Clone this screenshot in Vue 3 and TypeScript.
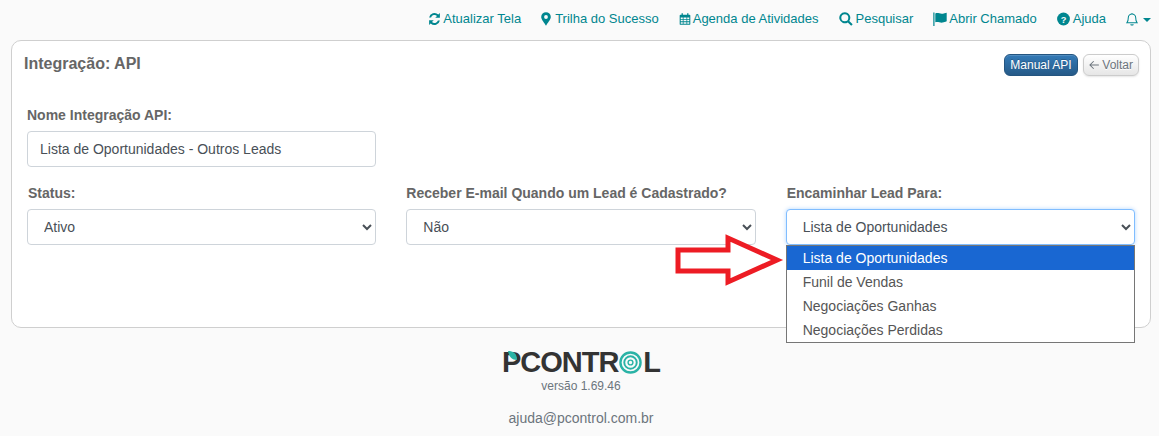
<script setup lang="ts">
const ops: string[] = ['Lista de Oportunidades', 'Funil de Vendas', 'Negociações Ganhas', 'Negociações Perdidas']
</script>

<template>
  <div class="page">
    <nav class="topnav">
      <a class="navitem">
        <svg class="ic" viewBox="0 0 14 14"><path d="M12.8 .6v5H7.800l1.900-1.900A3.900 3.900 0 0 0 3.300 5.300H1.200a5.900 5.900 0 0 1 9.900-3.100zM1.200 13.400v-5h5l-1.900 1.900a3.900 3.900 0 0 0 6.400-1.600h2.100a5.900 5.900 0 0 1-9.900 3.100z"/></svg>
        Atualizar Tela
      </a>
      <a class="navitem pin">
        <svg class="ic narrow" viewBox="0 0 10 14"><path fill-rule="evenodd" d="M5 .2a4.800 4.800 0 0 1 4.800 4.800C9.800 7.500 6.500 11 5 13.800 3.500 11 .2 7.500.2 5A4.800 4.800 0 0 1 5 .2zm0 2.900a1.900 1.900 0 1 0 0 3.800 1.900 1.900 0 0 0 0-3.800z"/></svg>
        Trilha do Sucesso
      </a>
      <a class="navitem">
        <svg class="ic cal" viewBox="0 0 14 14"><path fill-rule="evenodd" d="M3 .3h1.500V2h5V.3H11V2h1.200a1 1 0 0 1 1 1v9.800a1 1 0 0 1-1 1H1.800a1 1 0 0 1-1-1V3a1 1 0 0 1 1-1H3zM2 5.200v1.800h2.400V5.200zm3.300 0v1.800h3.400V5.200zm4.300 0v1.800H12V5.200zM2 8v1.700h2.400V8zm3.300 0v1.700h3.400V8zm4.300 0v1.700H12V8zm-7.600 2.700v1.900h2.400v-1.900zm3.300 0v1.900h3.400v-1.900zm4.300 0v1.900H12v-1.900z"/></svg>
        Agenda de Atividades
      </a>
      <a class="navitem wide">
        <svg class="ic big" viewBox="0 0 14 14"><path fill-rule="evenodd" d="M5.800 .3a5.500 5.500 0 0 1 4.500 8.600l3.400 3.400-1.500 1.500-3.400-3.400A5.500 5.500 0 1 1 5.800 .3zm0 2a3.500 3.500 0 1 0 0 7 3.500 3.500 0 0 0 0-7z"/></svg>
        Pesquisar
      </a>
      <a class="navitem flag">
        <svg class="ic big" viewBox="0 0 14 14"><path d="M.3 .5h1.200V14H.3zM2.300 1.500c2.600-1.200 4.800.8 7.600.2.900-.2 2.300-.6 3.800-1v8.600c-1.500.7-2.900 1.100-3.800 1.300-2.800.6-5-1.300-7.600-.3z"/></svg>
        Abrir Chamado
      </a>
      <a class="navitem wide">
        <svg class="ic" viewBox="0 0 14 14"><circle cx="7" cy="7" r="6.900"/><text x="7" y="10.800" text-anchor="middle" class="qmark">?</text></svg>
        Ajuda
      </a>
      <a class="navitem bell">
        <svg class="bellic" viewBox="0 0 14 16" fill="none" stroke="currentColor" stroke-width="1.200"><path d="M7 1.500a4.300 4.300 0 0 1 4.300 4.300c0 3.700.6 4.900 1.700 6H1c1.100-1.100 1.700-2.300 1.700-6A4.300 4.300 0 0 1 7 1.500zM7 .5v1M5.500 13.500a1.600 1.600 0 0 0 3 0"/></svg>
        <span class="caret"></span>
      </a>
    </nav>

    <main class="card">
      <header class="cardhead">
        <h1 class="title">Integração: API</h1>
        <div class="actions">
          <button class="btn primary" type="button">Manual API</button>
          <button class="btn light" type="button">
            <svg class="back" viewBox="0 0 11 10" fill="none" stroke="currentColor" stroke-width="1.100"><path d="M10.500 5H1M5 1 1 5l4 4"/></svg>
            Voltar
          </button>
        </div>
      </header>

      <div class="row single">
        <div class="field">
          <label class="lbl">Nome Integração API:</label>
          <input class="ctl" type="text" value="Lista de Oportunidades - Outros Leads" />
        </div>
      </div>

      <div class="row triple">
        <div class="field first">
          <label class="lbl">Status:</label>
          <select class="ctl sel"><option>Ativo</option></select>
        </div>
        <div class="field">
          <label class="lbl">Receber E-mail Quando um Lead é Cadastrado?</label>
          <select class="ctl sel"><option>Não</option></select>
        </div>
        <div class="field dropwrap">
          <label class="lbl">Encaminhar Lead Para:</label>
          <select class="ctl sel focus"><option v-for="o in ops" :key="o">{{ o }}</option></select>
          <ul class="drop">
            <li v-for="(o, i) in ops" :key="o" :class="{ on: i === 0 }">{{ o }}</li>
          </ul>
          <svg class="redarrow" viewBox="0 0 110 56" width="110" height="56">
            <polygon points="4,16 54,16 54,4 103,26 54,48 54,37 4,37" fill="#fff" stroke="#ed1c24" stroke-width="5" stroke-linejoin="miter" />
          </svg>
        </div>
      </div>
    </main>

    <footer class="foot">
      <div class="logo">
        <span class="logoword">P<svg class="leaf" viewBox="0 0 10 10"><path d="M0 0c5 0 9 2 9 9C4 9 1 6 0 0z"/></svg>CONTR<svg class="ring" viewBox="0 0 24 24" fill="none" stroke="#2ab3a6"><circle cx="12" cy="12" r="10.500" stroke-width="2.500"/><circle cx="12" cy="12" r="6.500" stroke-width="2"/><circle cx="12" cy="12" r="2.500" stroke-width="1.500"/></svg>L</span>
      </div>
      <div class="ver">versão 1.69.46</div>
      <div class="mail">ajuda@pcontrol.com.br</div>
    </footer>
  </div>
</template>

<style scoped>
.page {
  width: 1159px;
  height: 436px;
  overflow: hidden;
  background: #fafafa;
  font-family: "Liberation Sans", Arial, sans-serif;
  font-size: 14px;
  color: #495057;
}
.topnav {
  height: 40px;
  box-sizing: border-box;
  padding: 11px 8px 0 0;
  display: flex;
  justify-content: flex-end;
  align-items: flex-start;
  gap: 20px;
  color: #00868f;
  font-size: 13px;
  line-height: 16px;
}
.navitem {
  display: flex;
  align-items: center;
  gap: 2px;
  white-space: nowrap;
}
.navitem.wide { gap: 3px; }
.navitem.pin { gap: 4px; }
.navitem.flag { gap: 2px; }
.ic { width: 13px; height: 14px; fill: currentColor; flex: none; }
.ic.narrow { width: 10px; }
.ic.cal { width: 12px; }
.ic.big { width: 14px; }
.qmark { font-size: 10px; font-weight: 700; fill: #fafafa; font-family: "Liberation Sans", sans-serif; }
.bellic { width: 12px; height: 15px; }
.bell { gap: 5px; padding-top: 1px; }
.caret {
  width: 0;
  height: 0;
  border-left: 4px solid transparent;
  border-right: 4px solid transparent;
  border-top: 4px solid currentColor;
}
.card {
  margin: 0 8px 0 11px;
  height: 288px;
  box-sizing: border-box;
  background: #fff;
  border: 1px solid #cfcfcf;
  border-radius: 10px;
  padding: 13px 11px 0 12px;
}
.cardhead {
  display: flex;
  justify-content: space-between;
  align-items: flex-start;
}
.title {
  margin: 1px 0 0;
  font-size: 16px;
  line-height: 18px;
  font-weight: 700;
  color: #666;
}
.actions { display: flex; gap: 5px; }
.btn {
  height: 22px;
  padding: 0 5px;
  border-radius: 6px;
  font: 12px/20px "Liberation Sans", Arial, sans-serif;
  display: flex;
  align-items: center;
  gap: 3px;
}
.btn.primary {
  width: 74px;
  justify-content: center;
  color: #fff;
  border: 1px solid #245580;
  background: linear-gradient(#337ab7, #265a88);
  text-shadow: 0 -1px 0 rgba(0, 0, 0, .2);
  box-shadow: inset 0 1px 0 rgba(255, 255, 255, .15);
}
.btn.light {
  width: 56px;
  justify-content: center;
  color: #6c757d;
  border: 1px solid #ccc;
  background: linear-gradient(#fff, #e6e6e6);
  text-shadow: 0 1px 0 #fff;
  box-shadow: 0 1px 2px rgba(0, 0, 0, .1);
}
.back { width: 11px; height: 10px; }
.row { padding: 0 3px; }
.single { margin-top: 31px; width: 349px; }
.triple {
  margin-top: 18px;
  display: grid;
  grid-template-columns: repeat(3, 1fr);
  gap: 30px;
  width: 1111px;
  padding: 0 0 0 3px;
  box-sizing: border-box;
}
.field { display: flex; flex-direction: column; min-width: 0; }
.lbl {
  font-weight: 700;
  color: #666;
  line-height: 16px;
  margin-bottom: 8px;
  white-space: nowrap;
}
.first .lbl, .dropwrap .lbl { padding-left: 1px; }
.ctl {
  box-sizing: border-box;
  width: 100%;
  height: 36px;
  border: 1px solid #ced4da;
  border-radius: 4px;
  padding: 0 12px;
  background: #fff;
  color: #495057;
  font: 14px "Liberation Sans", Arial, sans-serif;
  outline: none;
}
.focus {
  border-color: #80bdff;
  box-shadow: 0 0 4px rgba(0, 123, 255, .3);
}
.dropwrap { position: relative; }
.drop {
  position: absolute;
  left: 0;
  right: 0;
  top: 60px;
  margin: 0;
  padding: 0;
  list-style: none;
  background: #fff;
  border: 1px solid #767676;
  z-index: 2;
}
.drop li {
  height: 24px;
  line-height: 24px;
  padding-left: 16px;
  color: #555;
}
.drop li.on { background: #1967d2; color: #fff; }
.redarrow {
  position: absolute;
  left: -112px;
  top: 49px;
  z-index: 3;
}
.foot {
  display: flex;
  flex-direction: column;
  align-items: center;
  width: 1162px;
  padding-top: 21px;
  color: #6c757d;
}
.logo { height: 30px; }
.logoword {
  position: relative;
  display: inline-flex;
  align-items: center;
  font-size: 29px;
  line-height: 26px;
  font-weight: 700;
  color: #333;
  letter-spacing: -1px;
}
.leaf {
  position: absolute;
  left: 6px;
  top: 2px;
  width: 10px;
  height: 10px;
  fill: #2ab3a6;
}
.ring { width: 23px; height: 23px; margin: 0 1px; }
.ver { font-size: 12px; line-height: 14px; }
.mail { font-size: 14px; line-height: 16px; margin-top: 17px; }
</style>

<style>
html, body { margin: 0; background: #fafafa; }
</style>
